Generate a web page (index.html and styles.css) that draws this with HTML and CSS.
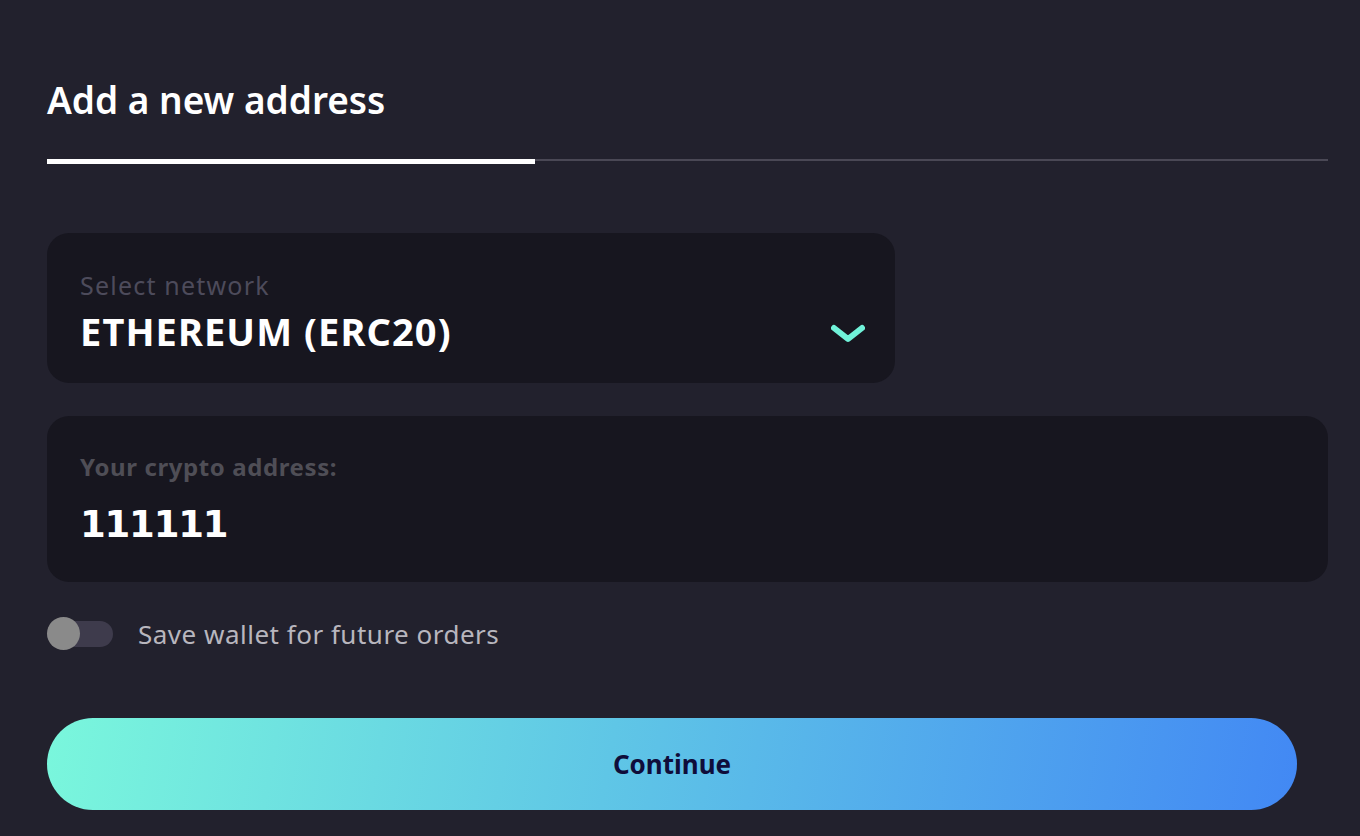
FILE: index.html
```html
<!DOCTYPE html>
<html lang="en">
<head>
<meta charset="utf-8">
<title>Add a new address</title>
<link rel="stylesheet" href="styles.css">
</head>
<body>
<main class="page">
  <h1 class="title">Add a new address</h1>
  <div class="tabs">
    <div class="tab-active"></div>
  </div>
  <div class="select-card">
    <div class="select-text">
      <div class="label">Select network</div>
      <div class="value">ETHEREUM (ERC20)</div>
    </div>
    <svg class="chevron" width="34" height="20" viewBox="0 0 34 20" aria-hidden="true">
      <path d="M3 4 L17 15 L31 4" fill="none" stroke="#70f2d9" stroke-width="6" stroke-linecap="round" stroke-linejoin="round"/>
    </svg>
  </div>
  <div class="address-card">
    <div class="label-bold">Your crypto address:</div>
    <div class="address-value">111111</div>
  </div>
  <div class="toggle-row">
    <div class="toggle"><div class="knob"></div></div>
    <span class="toggle-label">Save wallet for future orders</span>
  </div>
  <button class="continue">Continue</button>
</main>
</body>
</html>
```

FILE: styles.css
```css
html, body {
  margin: 0;
  padding: 0;
  background: #22212d;
  height: 100%;
  overflow: hidden;
}
.page {
  font-family: "Noto Sans", "Open Sans", sans-serif;
  padding: 76px 32px 0 47px;
  display: flex;
  flex-direction: column;
}
.title {
  margin: 0;
  color: #ffffff;
  font-size: 37px;
  font-weight: 600;
  line-height: 48px;
  letter-spacing: 0;
}
.tabs {
  margin-top: 35px;
  height: 6px;
  position: relative;
  width: 1281px;
}
.tabs::before {
  content: "";
  position: absolute;
  left: 0; right: 0; top: 0;
  height: 2px;
  background: #4a4855;
}
.tab-active {
  position: absolute;
  left: 0; top: 0;
  width: 488px;
  height: 5px;
  background: #ffffff;
}
.select-card {
  margin-top: 68px;
  width: 848px;
  height: 150px;
  box-sizing: border-box;
  background: #17161f;
  border-radius: 22px;
  padding: 0 30px 0 33px;
  display: flex;
  align-items: flex-start;
  justify-content: space-between;
}
.select-text { display: flex; flex-direction: column; padding-top: 36px; }
.label {
  color: #4d4b5b;
  font-size: 25px;
  line-height: 32px;
  letter-spacing: 1.2px;
}
.value {
  color: #ffffff;
  font-size: 38px;
  font-weight: 700;
  line-height: 46px;
  letter-spacing: 1.1px;
  margin-top: 7px;
}
.chevron { margin-top: 91px; }
.address-card {
  margin-top: 33px;
  width: 1281px;
  height: 166px;
  box-sizing: border-box;
  background: #17161f;
  border-radius: 22px;
  padding: 36px 33px 0;
  display: flex;
  flex-direction: column;
}
.label-bold {
  color: #4f4e56;
  font-size: 24px;
  font-weight: 700;
  line-height: 30px;
  letter-spacing: 0.6px;
}
.address-value {
  color: #ffffff;
  font-family: "DejaVu Sans", sans-serif;
  font-size: 37px;
  font-weight: 700;
  line-height: 46px;
  letter-spacing: -1.2px;
  margin-top: 20px;
}
.toggle-row {
  margin-top: 34px;
  display: flex;
  align-items: center;
  gap: 25px;
  height: 36px;
}
.toggle {
  width: 66px;
  height: 26px;
  border-radius: 13px;
  background: #3e3b4c;
  position: relative;
}
.knob {
  position: absolute;
  left: 0;
  top: -4px;
  width: 33px;
  height: 33px;
  border-radius: 50%;
  background: #8a8a8a;
}
.toggle-label {
  color: #b8b6be;
  font-size: 26px;
  letter-spacing: 0.5px;
}
.continue {
  margin-top: 66px;
  width: 1250px;
  height: 92px;
  border: none;
  border-radius: 46px;
  background: linear-gradient(100deg, #7af7dc 0%, #5fc6e6 45%, #4288f4 100%);
  color: #0f0d3a;
  font-family: "Noto Sans", "Open Sans", sans-serif;
  font-size: 26px;
  font-weight: 700;
  cursor: pointer;
}
```
